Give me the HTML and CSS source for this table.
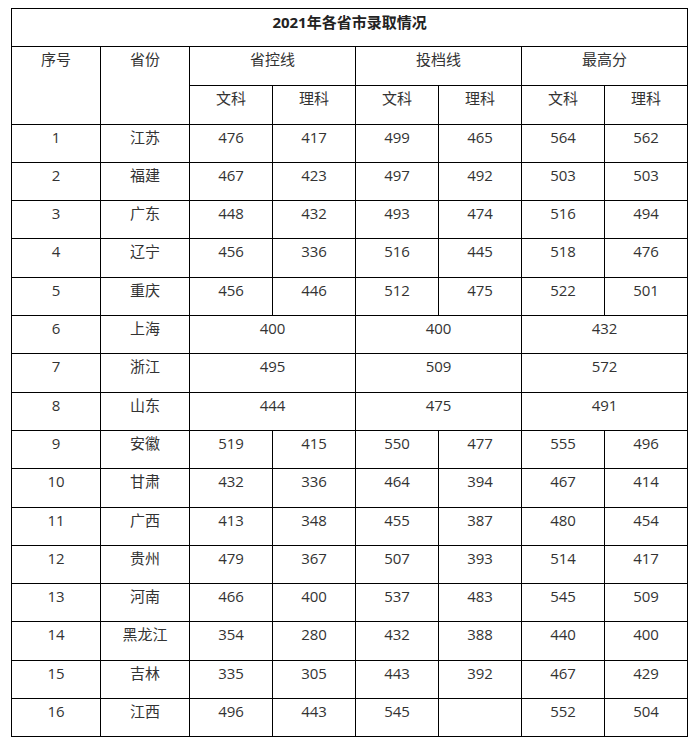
FILE: index.html
```html
<!DOCTYPE html>
<html lang="zh-CN">
<head>
<meta charset="utf-8">
<title>2021年各省市录取情况</title>
<link rel="stylesheet" href="styles.css">
</head>
<body>
<table class="score-table">
  <colgroup>
    <col class="c-wide"><col class="c-wide">
    <col class="c-num"><col class="c-num"><col class="c-num"><col class="c-num"><col class="c-num"><col class="c-num">
  </colgroup>
  <tr class="title-row"><td colspan="8" class="title">2021年各省市录取情况</td></tr>
  <tr class="head-row">
    <td rowspan="2">序号</td><td rowspan="2">省份</td>
    <td colspan="2">省控线</td><td colspan="2">投档线</td><td colspan="2">最高分</td>
  </tr>
  <tr class="head-row">
    <td>文科</td><td>理科</td><td>文科</td><td>理科</td><td>文科</td><td>理科</td>
  </tr>
  <tr><td>1</td><td>江苏</td><td>476</td><td>417</td><td>499</td><td>465</td><td>564</td><td>562</td></tr>
  <tr><td>2</td><td>福建</td><td>467</td><td>423</td><td>497</td><td>492</td><td>503</td><td>503</td></tr>
  <tr><td>3</td><td>广东</td><td>448</td><td>432</td><td>493</td><td>474</td><td>516</td><td>494</td></tr>
  <tr><td>4</td><td>辽宁</td><td>456</td><td>336</td><td>516</td><td>445</td><td>518</td><td>476</td></tr>
  <tr><td>5</td><td>重庆</td><td>456</td><td>446</td><td>512</td><td>475</td><td>522</td><td>501</td></tr>
  <tr><td>6</td><td>上海</td><td colspan="2">400</td><td colspan="2">400</td><td colspan="2">432</td></tr>
  <tr><td>7</td><td>浙江</td><td colspan="2">495</td><td colspan="2">509</td><td colspan="2">572</td></tr>
  <tr><td>8</td><td>山东</td><td colspan="2">444</td><td colspan="2">475</td><td colspan="2">491</td></tr>
  <tr><td>9</td><td>安徽</td><td>519</td><td>415</td><td>550</td><td>477</td><td>555</td><td>496</td></tr>
  <tr><td>10</td><td>甘肃</td><td>432</td><td>336</td><td>464</td><td>394</td><td>467</td><td>414</td></tr>
  <tr><td>11</td><td>广西</td><td>413</td><td>348</td><td>455</td><td>387</td><td>480</td><td>454</td></tr>
  <tr><td>12</td><td>贵州</td><td>479</td><td>367</td><td>507</td><td>393</td><td>514</td><td>417</td></tr>
  <tr><td>13</td><td>河南</td><td>466</td><td>400</td><td>537</td><td>483</td><td>545</td><td>509</td></tr>
  <tr><td>14</td><td>黑龙江</td><td>354</td><td>280</td><td>432</td><td>388</td><td>440</td><td>400</td></tr>
  <tr><td>15</td><td>吉林</td><td>335</td><td>305</td><td>443</td><td>392</td><td>467</td><td>429</td></tr>
  <tr><td>16</td><td>江西</td><td>496</td><td>443</td><td>545</td><td></td><td>552</td><td>504</td></tr>
</table>
</body>
</html>
```

FILE: styles.css
```css
html, body {
  background: #fff;
}
body {
  margin: 8px 0 0 11px;
  font-family: "Open Sans", "Noto Sans CJK SC", sans-serif;
  font-size: 15px;
  color: #333;
}
.score-table {
  border-collapse: collapse;
  table-layout: fixed;
  width: 676px;
}
.c-wide { width: 89px; }
.c-num { width: 83px; }
.score-table td {
  border: 1px solid #000;
  text-align: center;
  vertical-align: top;
  padding: 1px 4px 0;
  line-height: 22px;
  font-family: "Open Sans", "Noto Sans CJK SC", sans-serif;
}
.score-table tr {
  height: 38.3px;
}
.title-row { height: 38px; }
.title-row .title {
  font-weight: bold;
  color: #222;
  padding-top: 2px;
}
.head-row:nth-child(2) { height: 39px; }
```
